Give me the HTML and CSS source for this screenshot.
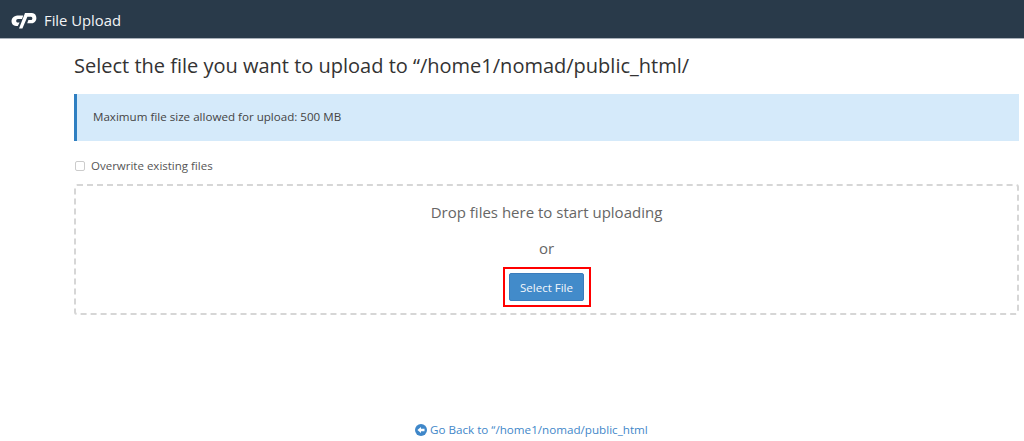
FILE: index.html
```html
<!DOCTYPE html>
<html lang="en">
<head>
<meta charset="utf-8">
<title>File Upload</title>
<link rel="stylesheet" href="styles.css">
</head>
<body>
<header class="topbar">
  <svg class="logo" width="26" height="17" viewBox="0 0 26 17" aria-hidden="true">
    <path d="M6.5 3.5H12.3L11 7H7C4.8 7 4.4 10.4 6.8 10.6H8.6L6.8 14H5C-1.4 13.4 -1 4 6.5 3.5Z" fill="#fff"/>
    <path d="M8 16.5L14 1H21C27 1.2 26.8 11 20.6 11.3H16.2L17.4 8H20C21.8 7.8 21.8 5 20 4.8H16.4L11.4 16.5Z" fill="#fff"/>
  </svg>
  <span class="topbar-title">File Upload</span>
</header>
<main class="content">
  <h1 class="heading">Select the file you want to upload to “/home1/nomad/public_html/</h1>
  <div class="alert">Maximum file size allowed for upload: 500 MB</div>
  <label class="overwrite"><span class="checkbox"></span>Overwrite existing files</label>
  <section class="dropzone">
    <p class="drop-text">Drop files here to start uploading</p>
    <p class="drop-or">or</p>
    <div class="highlight"><button class="select-btn" type="button">Select File</button></div>
  </section>
</main>
<footer class="back">
  <a class="back-link" href="#">
    <svg class="back-icon" width="12" height="12" viewBox="0 0 12 12" aria-hidden="true">
      <circle cx="6" cy="6" r="6" fill="#3f87c9"/>
      <path d="M2.4 6L6 2.9V4.8H9.5V7.2H6V9.1Z" fill="#fff"/>
    </svg>Go Back to “/home1/nomad/public_html</a>
</footer>
</body>
</html>
```
FILE: styles.css
```css
* { box-sizing: border-box; }
html, body { margin: 0; height: 441px; overflow: hidden; }
body {
  background: #fff;
  color: #555;
  font-family: "Open Sans", "Liberation Sans", sans-serif;
  display: flex;
  flex-direction: column;
}
.topbar {
  height: 39px;
  background: #293a4a;
  border-bottom: 1px solid #a9b1ba;
  display: flex;
  align-items: center;
  padding-left: 11px;
  flex: none;
}
.logo { margin-right: 7px; margin-top: 2px; }
.topbar-title { color: #f2f4f6; font-size: 14.8px; line-height: 20px; margin-top: 2px; }
.content {
  margin-left: 74px;
  width: 945px;
  flex: none;
}
.heading {
  margin: 13px 0 0;
  font-size: 20px;
  line-height: 28px;
  font-weight: 400;
  color: #333;
}
.alert {
  margin-top: 14px;
  height: 47px;
  background: #d5eafa;
  border-left: 3px solid #2f7fc1;
  padding-left: 16px;
  font-size: 11.6px;
  line-height: 46px;
  color: #444;
}
.overwrite {
  margin-top: 15px;
  display: flex;
  align-items: center;
  height: 18px;
  font-size: 11.5px;
  color: #555;
}
.checkbox {
  width: 10px;
  height: 10px;
  border: 1px solid #ccc;
  border-radius: 2px;
  margin: 1px 6px 0 1px;
  background: #fff;
}
.dropzone {
  margin-top: 10px;
  height: 131px;
  border: 2px dashed #d6d6d6;
  border-radius: 3px;
  display: flex;
  flex-direction: column;
  align-items: center;
}
.drop-text {
  margin: 16px 0 0;
  font-size: 15px;
  line-height: 20px;
  color: #666;
}
.drop-or {
  margin: 16px 0 0;
  font-size: 15px;
  line-height: 20px;
  color: #666;
}
.highlight {
  margin-top: 9px;
  width: 88px;
  height: 40px;
  border: 2px solid #f00;
  display: flex;
  align-items: center;
  justify-content: center;
}
.select-btn {
  width: 75px;
  height: 28px;
  border: 1px solid #3a7cbc;
  border-radius: 2px;
  background: #428bca;
  color: #f4f8fc;
  font-family: inherit;
  font-size: 11.5px;
  padding: 0;
}
.back {
  margin-top: auto;
  height: 22px;
  padding-left: 415px;
  line-height: 22px;
  flex: none;
}
.back-link {
  color: #3f87c9;
  text-decoration: none;
  font-size: 11.65px;
  display: inline-flex;
  align-items: center;
}
.back-icon { margin-right: 3px; }
```
